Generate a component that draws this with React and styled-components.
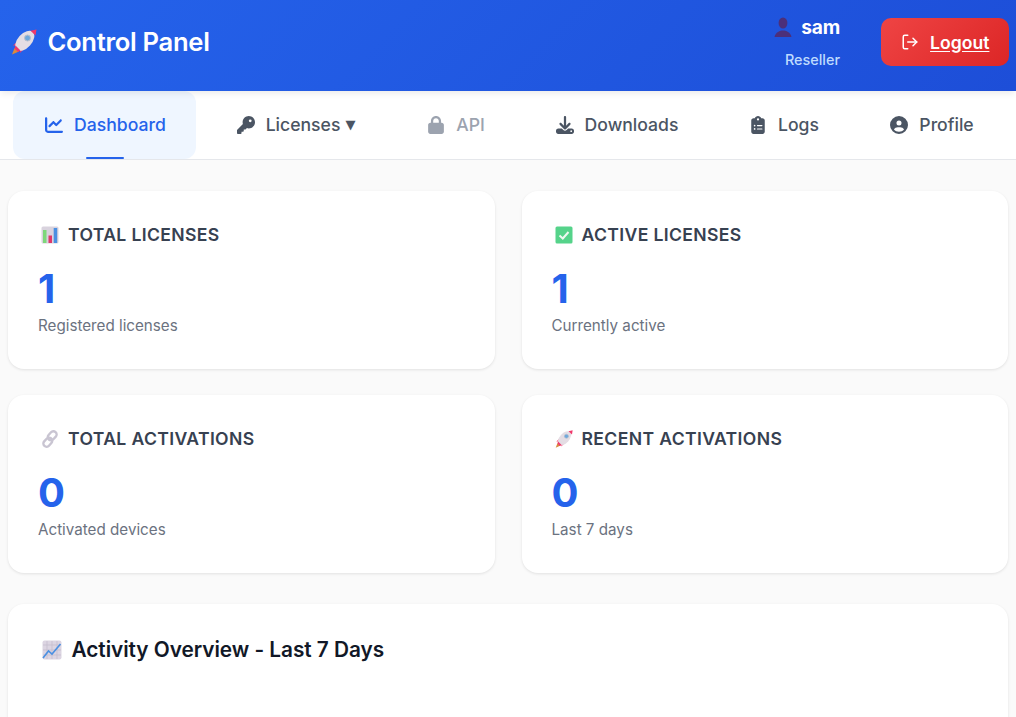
import React from "react";
import styled, { createGlobalStyle } from "styled-components";
import { FaChartLine, FaKey, FaLock, FaDownload, FaClipboardList, FaCircleUser } from "react-icons/fa6";

const Global = createGlobalStyle`
  html, body { margin: 0; padding: 0; background: #fafafa; overflow: hidden; }
  body { font-family: Inter, "Liberation Sans", sans-serif; }
  * { box-sizing: border-box; }
`;

const Page = styled.div`
  height: 717px;
  overflow: hidden;
`;
const Header = styled.header`
  position: relative;
  z-index: 2;
  height: 91px;
  background: linear-gradient(135deg, #2563eb 0%, #1d4ed8 100%);
  box-shadow: 0 4px 6px -1px rgba(0, 0, 0, 0.07);
  display: flex;
  align-items: center;
  justify-content: space-between;
  padding: 0 7px 0 11px;
  color: #fff;
`;
const Brand = styled.h1`
  margin: 0 0 7px;
  display: flex;
  align-items: center;
  gap: 10.5px;
  font-size: 25.6px;
  line-height: 32px;
  font-weight: 600;
  letter-spacing: -0.3px;
`;
const UserArea = styled.div`
  display: flex;
  align-items: center;
  gap: 41px;
  margin-bottom: 7px;
`;
const UserInfo = styled.div`
  display: flex;
  flex-direction: column;
  align-items: flex-end;
  gap: 12px;
`;
const UserName = styled.div`
  display: flex;
  align-items: center;
  gap: 9px;
  font-size: 19.2px;
  line-height: 24px;
  font-weight: 700;
  letter-spacing: -0.2px;
  margin-top: -1px;
`;
const Role = styled.div`
  font-size: 14.4px;
  line-height: 18px;
  font-weight: 500;
  color: #bfdbfe;
`;
const LogoutButton = styled.a`
  width: 128px;
  height: 48px;
  border-radius: 10px;
  display: flex;
  align-items: center;
  justify-content: center;
  gap: 11.5px;
  background: linear-gradient(135deg, #ef4444, #dc2626);
  color: #fff;
  font-size: 17.6px;
  font-weight: 600;
  text-decoration: underline;
  text-underline-offset: 2px;
`;
const Nav = styled.nav`
  height: 69px;
  background: #fff;
  border-bottom: 1px solid #e5e7eb;
  display: flex;
  align-items: stretch;
`;
const Tab = styled.a`
  position: relative;
  width: ${(p) => p.$w}px;
  margin-left: ${(p) => p.$ml || 0}px;
  height: 68px;
  padding: 0 0 1px ${(p) => (p.$active ? 2 : 0)}px;
  display: flex;
  align-items: center;
  justify-content: center;
  gap: 11px;
  border-radius: 12px;
  font-size: 17.6px;
  font-weight: 500;
  color: ${(p) => (p.$active ? "#2563eb" : p.$disabled ? "#9ca3af" : "#4b5563")};
  background: ${(p) => (p.$active ? "#eff6ff" : "transparent")};
  svg { font-size: 18px; flex: none; }
  ${(p) =>
    p.$active &&
    `&::after {
      content: "";
      position: absolute;
      left: 73px;
      bottom: 0;
      width: 38px;
      height: 2px;
      background: #2563eb;
      border-radius: 2px;
    }`}
`;
const Caret = styled.span`
  font-family: "DejaVu Sans", sans-serif;
  font-size: 13px;
  margin-left: -6px;
`;
const Main = styled.main`
  padding: 31px 8px 0;
`;
const Grid = styled.div`
  display: grid;
  grid-template-columns: 487px 486.5px;
  gap: 26px 26.5px;
`;
const Card = styled.section`
  height: 178px;
  background: #fff;
  border-radius: 16px;
  box-shadow: 0 1px 3px rgba(0, 0, 0, 0.1);
  padding: 30px;
`;
const CardTitle = styled.h3`
  margin: 0 0 16px;
  display: flex;
  align-items: center;
  gap: 9px;
  font-size: 17.6px;
  line-height: 28px;
  font-weight: 600;
  letter-spacing: 0.36px;
  color: #374151;
  text-transform: uppercase;
  svg { margin-left: 3px; }
`;
const Value = styled.div`
  font-size: 40px;
  line-height: 48px;
  font-weight: 700;
  color: #2563eb;
`;
const Hint = styled.div`
  font-size: 15.2px;
  line-height: 20px;
  margin-top: 3px;
  color: #6b7280;
`;
const Panel = styled.section`
  margin-top: 31px;
  height: 200px;
  background: #fff;
  border-radius: 16px;
  box-shadow: 0 1px 3px rgba(0, 0, 0, 0.1);
  padding: 30px 34px;
`;
const PanelTitle = styled.h2`
  margin: 0;
  display: flex;
  align-items: center;
  gap: 9.5px;
  font-size: 20.8px;
  line-height: 32px;
  font-weight: 600;
  letter-spacing: -0.04px;
  color: #111827;
`;
const Glyph = styled.svg`
  flex: none;
`;

const Rocket = ({ size = 18 }) => (
  <Glyph width={size} height={size} viewBox="0 0 26 26">
    <path d="M1 25.5 L3.5 19 L8 22.5 Z" fill="#d98a3d" />
    <path d="M2 16.5 L8.5 10.5 L10 16.5 Z" fill="#f0386b" />
    <path d="M9 24 L15.5 17.5 L10 16 Z" fill="#f0386b" />
    <ellipse cx="13.8" cy="11.8" rx="7" ry="12" transform="rotate(42 13.8 11.8)" fill="#e4dde4" />
    <path d="M19.5 1.8 L25.5 0.5 L24.5 6.5 Z" fill="#f0386b" />
    <path d="M4.5 16.5 L9.5 21.5 L7 23 L3.5 19.5 Z" fill="#f0386b" />
    <circle cx="16.5" cy="9" r="3" fill="#6fa8dc" stroke="#b9c0cc" />
  </Glyph>
);
const BarsEmoji = () => (
  <Glyph width="18" height="18" viewBox="0 0 18 18">
    <rect x="0.5" y="0.5" width="17" height="17" rx="1.5" fill="#d9d3de" />
    <rect x="2" y="4" width="3.5" height="13" fill="#7ed87a" />
    <rect x="7.5" y="9.5" width="3.5" height="7.5" fill="#e0386b" />
    <rect x="12.7" y="2" width="3.5" height="15" fill="#4a90e2" />
  </Glyph>
);
const CheckEmoji = () => (
  <Glyph width="18" height="18" viewBox="0 0 18 18">
    <rect x="0.5" y="0.5" width="17" height="17" rx="1.5" fill="#55d38a" />
    <path d="M4.5 9.5 L7.8 12.5 L13.5 6" fill="none" stroke="#eef8f0" strokeWidth="2" />
  </Glyph>
);
const LinkEmoji = () => (
  <Glyph width="18" height="18" viewBox="0 0 18 18">
    <g fill="none" stroke="#c9c5d2" strokeWidth="2.4">
      <rect x="8" y="0.8" width="6.4" height="10" rx="3.2" transform="rotate(42 11.2 5.8)" />
      <rect x="3.6" y="7.2" width="6.4" height="10" rx="3.2" transform="rotate(42 6.8 12.2)" />
    </g>
  </Glyph>
);
const TrendEmoji = () => (
  <Glyph width="20" height="20" viewBox="0 0 20 20">
    <rect x="0.5" y="0.5" width="19" height="19" rx="2" fill="#dcd5e2" />
    <path d="M5 1V19M10 1V19M15 1V19M1 5H19M1 10H19M1 15H19" stroke="#c3bbcb" strokeWidth="0.7" />
    <path d="M1 18 L6.5 11 L10 14 L18.5 4" fill="none" stroke="#4a90e2" strokeWidth="1.6" />
  </Glyph>
);
const PersonEmoji = () => (
  <Glyph width="18" height="20" viewBox="0 0 18 20">
    <ellipse cx="9" cy="6" rx="4.4" ry="5.6" fill="#4c2f7a" />
    <path d="M0.5 20 C1.5 15 6 13.5 9 13.5 C12 13.5 16.5 15 17.5 20 Z" fill="#4c2f7a" />
  </Glyph>
);
const LogoutIcon = () => (
  <Glyph width="18" height="18" viewBox="0 0 24 24" fill="none" stroke="#fff" strokeWidth="2" strokeLinecap="round" strokeLinejoin="round">
    <path d="M9 21H5a2 2 0 0 1-2-2V5a2 2 0 0 1 2-2h4" />
    <path d="M16 17l5-5-5-5" />
    <path d="M21 12H9" />
  </Glyph>
);

const stats = [
  { icon: <BarsEmoji />, title: "Total Licenses", value: 1, hint: "Registered licenses" },
  { icon: <CheckEmoji />, title: "Active Licenses", value: 1, hint: "Currently active" },
  { icon: <LinkEmoji />, title: "Total Activations", value: 0, hint: "Activated devices" },
  { icon: <Rocket />, title: "Recent Activations", value: 0, hint: "Last 7 days" },
];

export default function App() {
  return (
    <Page>
      <Global />
      <Header>
        <Brand>
          <Rocket size={26} />
          Control Panel
        </Brand>
        <UserArea>
          <UserInfo>
            <UserName>
              <PersonEmoji />
              sam
            </UserName>
            <Role>Reseller</Role>
          </UserInfo>
          <LogoutButton>
            <LogoutIcon />
            Logout
          </LogoutButton>
        </UserArea>
      </Header>
      <Nav>
        <Tab $active $w={183} $ml={13}><FaChartLine />Dashboard</Tab>
        <Tab $w={160} $ml={20}><FaKey />Licenses <Caret>▼</Caret></Tab>
        <Tab $w={110} $ml={25} $disabled><FaLock />API</Tab>
        <Tab $w={160} $ml={26}><FaDownload />Downloads</Tab>
        <Tab $w={100} $ml={37}><FaClipboardList />Logs</Tab>
        <Tab $w={110} $ml={43}><FaCircleUser />Profile</Tab>
      </Nav>
      <Main>
        <Grid>
          {stats.map((s) => (
            <Card key={s.title}>
              <CardTitle>{s.icon}{s.title}</CardTitle>
              <Value>{s.value}</Value>
              <Hint>{s.hint}</Hint>
            </Card>
          ))}
        </Grid>
        <Panel>
          <PanelTitle><TrendEmoji />Activity Overview - Last 7 Days</PanelTitle>
        </Panel>
      </Main>
    </Page>
  );
}
